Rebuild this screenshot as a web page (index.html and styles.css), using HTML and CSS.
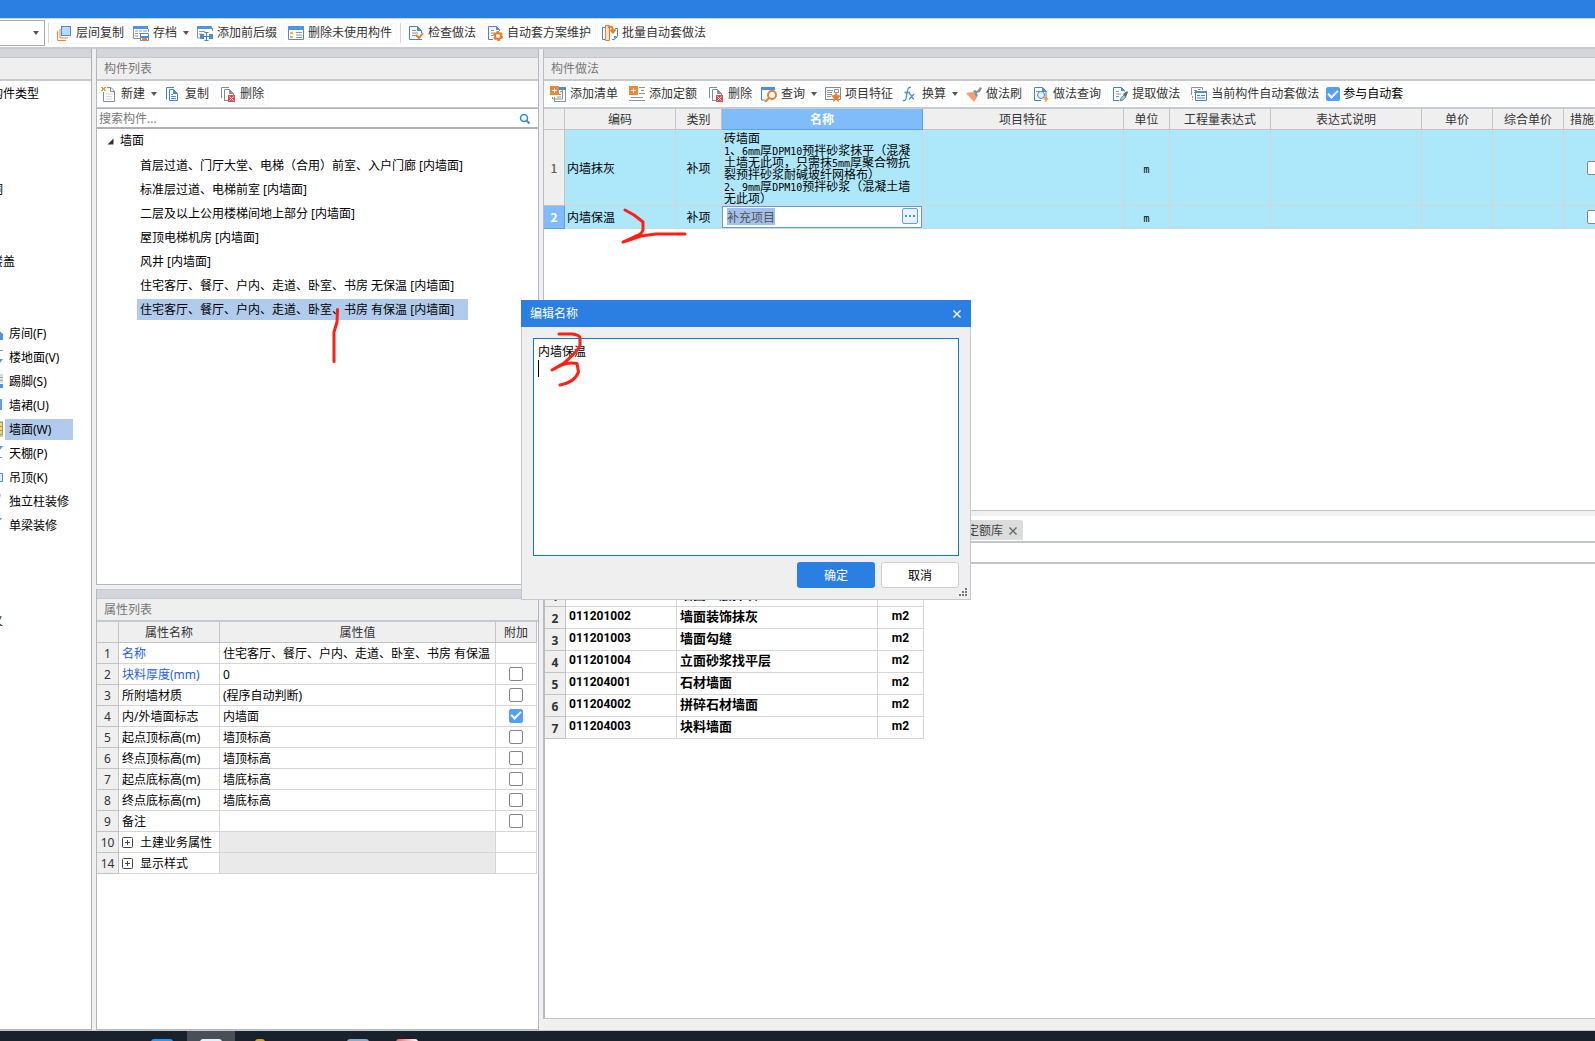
FILE: index.html
```html
<!DOCTYPE html>
<html lang="zh-CN">
<head>
<meta charset="utf-8">
<title>构件做法</title>
<link rel="stylesheet" href="styles.css">
</head>
<body>
<svg class="sprite" aria-hidden="true">
  <symbol id="i-layers" viewBox="0 0 16 16"><path d="M1.500 6v9.500H10M4 4v9h8" fill="none" stroke="#ef8532"/><rect x="5.500" y="1.500" width="9" height="9" fill="#b7d9ff" stroke="#4a8ddb"/></symbol>
  <symbol id="i-archive" viewBox="0 0 16 16"><path d="M.5 1v12.500H8M15.500 4v3" fill="none" stroke="#8a949d"/><path d="M0 1h15v3H0z" fill="#4f95e4"/><path d="M2 6h3M6 6h3M10 6h4M2 8.500h3M6 8.500h2M2 11h3" stroke="#8a949d"/><path d="M7.500 8.500h8v7h-8z" fill="#fff" stroke="#4a8ddb"/><path d="M8 11h7v2H8z" fill="#4a8ddb"/><path d="M9 13h5v3H9z" fill="#ef7c26"/></symbol>
  <symbol id="i-affix" viewBox="0 0 16 16"><path d="M.5 1v12h4M15.500 3v3" fill="none" stroke="#8a949d"/><path d="M0 1h15v3H0z" fill="#4f95e4"/><path d="M2 6.500h6M2 9h3" stroke="#8a949d"/><path d="M3 9h4v5H3zM12 9h4v5h-4z" fill="#4a8ddb"/><path d="M9.500 8v7.500M7.500 7.500h4M7.500 15.500h4M5 11.500h8" stroke="#3f82d6"/></symbol>
  <symbol id="i-unused" viewBox="0 0 16 16"><path d="M.5 2v12.500h15V2" fill="#fff" stroke="#4a8ddb"/><path d="M0 1h16v4H0z" fill="#4f95e4"/><path d="M2 7l3 2M5 7L2 9M2 11l3 2M5 11l-3 2" stroke="#f39a2c"/><path d="M8 7.500h6M8 10h6M8 12.500h6" stroke="#8a949d"/></symbol>
  <symbol id="i-check" viewBox="0 0 16 16"><path d="M13.500 8V5.500l-4-4h-8v13H14" fill="none" stroke="#3f82d6"/><path d="M9 1v5h5z" fill="#4a8ddb"/><path d="M4 5.500h4M4 8h6M4 10.500h4" stroke="#8a949d"/><path d="M8 10l3 3 4-5" fill="none" stroke="#ef7c26" stroke-width="2"/></symbol>
  <symbol id="i-scheme" viewBox="0 0 16 16"><path d="M12.500 6V4.500l-3-3h-8v13H6" fill="none" stroke="#3f82d6"/><path d="M9 1v4h4z" fill="#4a8ddb"/><path d="M4 5.500h3M4 8h4M4 10.500h2" stroke="#8a949d"/><circle cx="11" cy="11" r="4" fill="none" stroke="#ef7c26" stroke-width="2" stroke-dasharray="2.500 1.680"/><circle cx="11" cy="11" r="3" fill="#fff" stroke="#ef7c26" stroke-width="2"/></symbol>
  <symbol id="i-batch" viewBox="0 0 16 16"><path d="M3 2.500H.5v12H3M13 3.500h2.500v8l-3 3H10" fill="none" stroke="#3f82d6"/><path d="M12 11h3l-3 3z" fill="#4a8ddb"/><path d="M3.500.5h4v15h-4z" fill="#fde3cf" stroke="#ef7c26"/><path d="M6 2.500c4-2 5 0 5 4M8.500 4.500l2.500 3 2.500-3" fill="none" stroke="#ef7c26" stroke-width="2"/></symbol>
  <symbol id="i-new" viewBox="0 0 16 16"><path d="M2.500 6v9.500h11V5L10 1.500H6" fill="#fff" stroke="#7f8a94"/><path d="M9.500 1.500v4h4" fill="none" stroke="#7f8a94"/><path d="M5 8h6M5 10.500h6M5 13h6" stroke="#cfd4d8"/><path d="M0 1h2v1H0zM3 1h2v1H3zM1 2h3v2H1zM0 4h2v1H0zM3 4h2v1H3z" fill="#f39a2c"/></symbol>
  <symbol id="i-copy" viewBox="0 0 16 16"><path d="M1.500 13.500V1.500H9" fill="none" stroke="#3f82d6"/><path d="M4.500 3.500h4l4 4v7h-8z" fill="#fff" stroke="#3f82d6"/><path d="M8 3v5h5z" fill="#4a8ddb"/><path d="M6 8.500h2M6 10.500h5M6 12.500h5" stroke="#4a8ddb"/></symbol>
  <symbol id="i-del" viewBox="0 0 16 16"><path d="M1.500 12V1.500H9M4.500 14.500v-11h5l4 4V9M4 14.500h4" fill="none" stroke="#7f8a94"/><path d="M9 3v5h5z" fill="#8a949d"/><path d="M8 9h7v7H8z" fill="#d9504e"/><path d="M9.500 10.500l4 4M13.500 10.500l-4 4" stroke="#fff"/></symbol>
  <symbol id="i-addlist" viewBox="0 0 16 16"><path d="M9 1h7v3H9z" fill="#4a8ddb"/><path d="M15.500 4v11.500h-11V11M12.500 4v9H2.500v-2M10 5.500h3" fill="none" stroke="#8a949d"/><path d="M7 8.500h4M7 11h4" stroke="#8a949d"/><path d="M0 0h9v9H0z" fill="#f08632"/><path d="M4.500 2v5M2 4.500h5" stroke="#fff"/></symbol>
  <symbol id="i-addquota" viewBox="0 0 16 16"><path d="M10 1.500h6M12 4.500h3M10 7.500h6M2 11.500h12M0 14.500h16" stroke="#8a949d"/><path d="M0 0h9v9H0z" fill="#f08632"/><path d="M4.500 2v5M2 4.500h5" stroke="#fff"/></symbol>
  <symbol id="i-query" viewBox="0 0 16 16"><path d="M.5 2v12H4M13.500 2v2" fill="none" stroke="#3f82d6"/><path d="M0 1h14v3H0z" fill="#4a8ddb"/><circle cx="11" cy="9" r="4" fill="#fff" stroke="#ef7c26" stroke-width="2"/><path d="M8 12l-4 4" stroke="#ef7c26" stroke-width="2"/></symbol>
  <symbol id="i-feature" viewBox="0 0 16 16"><path d="M.5 1.500h15v12H.5z" fill="#fff" stroke="#7f8a94"/><path d="M2 4.500h6M2 6.500h5M2 8.500h5M2 10.500h4M9.500 3.500h4v3h-4z" fill="none" stroke="#8a949d"/><path d="M11 6l1.500 3 3.500.5-2.500 2.500.5 4-3-2-3 2 .5-4L6 9.500l3.500-.5z" fill="#ef7c26"/></symbol>
  <symbol id="i-fx" viewBox="0 0 16 16"><path d="M1 14.500c4 1 3-4 4-8s1-5.500 4-5M2.500 6.500H8M7 8c3-1 2 5 5 5M12 8l-5 5.500" fill="none" stroke="#4a8ddb" stroke-width="1.300"/></symbol>
  <symbol id="i-brush" viewBox="0 0 16 16"><path d="M0 7l7-1 4 5-3 5z" fill="#ff9a6b"/><path d="M7 5l2-1 2 1 3-4 2 1-2 4-3 1 1 3-2 1z" fill="#8a949d"/></symbol>
  <symbol id="i-find" viewBox="0 0 16 16"><path d="M13 15.500V5L9.500 1.500h-8v13H8" fill="none" stroke="#3f82d6"/><path d="M9 1v5h5z" fill="#4a8ddb"/><circle cx="8" cy="9" r="3.500" fill="#e4eefb" stroke="#5b80bd"/><path d="M3 5.500h4" stroke="#8a949d"/><path d="M10.500 11l1.500 1.500" stroke="#5b80bd"/><path d="M13 10l1 2 2 1-2 1-1 2-1-2-2-1 2-1z" fill="#f5a623"/></symbol>
  <symbol id="i-extract" viewBox="0 0 16 16"><path d="M12.500 5.500V4.500l-3-3h-8v13H7" fill="none" stroke="#3f82d6"/><path d="M9 1v4h4z" fill="#4a8ddb"/><path d="M4 5.500h3M4 8h5M4 10.500h3" stroke="#8a949d"/><path d="M8 15l1-3 3-3 2 2-3 3z" fill="#9fd0d8" stroke="#6f8c96"/><path d="M11 8l4-3 1 1-2 5z" fill="#5c6770"/></symbol>
  <symbol id="i-current" viewBox="0 0 16 16"><path d="M.5 9V1.500h11V4M3 4.500h3M7 3.500h2.500M3 6.500h1" fill="none" stroke="#8a949d"/><path d="M1.500 10v4" stroke="#ef7c26" stroke-dasharray="2 1"/><path d="M4.500 5.500h11v9h-11z" fill="#fff" stroke="#3f82d6"/><path d="M4 5h12v2H4z" fill="#4a8ddb"/><path d="M6 9.500h3M10 9.500h4M6 12h8" stroke="#3f82d6"/></symbol>
  <symbol id="i-glass" viewBox="0 0 16 16"><circle cx="7" cy="7" r="3.500" fill="#eef7ff" stroke="#3a8dc0" stroke-width="1.500"/><path d="M9.500 9.500l3 3" stroke="#3a8dc0" stroke-width="2"/></symbol>
  <symbol id="i-caret" viewBox="0 0 6 4"><path d="M0 0h6L3 4z" fill="#555"/></symbol>
  <symbol id="i-dots" viewBox="0 0 10 2"><path d="M0 0h2v2H0zM4 0h2v2H4zM8 0h2v2H8z" fill="#4a94dc"/></symbol>
  <symbol id="i-x" viewBox="0 0 8 8"><path d="M.5.5l7 7M7.500.5l-7 7" fill="none" stroke="currentColor" stroke-width="1.400"/></symbol>
  <symbol id="i-plus" viewBox="0 0 11 11"><rect x=".5" y=".5" width="10" height="10" rx="1" fill="#fff" stroke="#444"/><path d="M3 5.500h5M5.500 3v5" stroke="#444"/></symbol>
  <symbol id="s-room" viewBox="0 0 16 16"><path d="M1 8l7-6 8 7v6H2V8z" fill="#4f95e4"/></symbol>
  <symbol id="s-floor" viewBox="0 0 16 16"><path d="M1 1.500h15" stroke="#8a949d"/><path d="M11 10h5l-3 4z" fill="#4f95e4"/></symbol>
  <symbol id="s-skirt" viewBox="0 0 16 16"><path d="M0 1h16v9H0z" fill="#ddd"/><path d="M0 4.500h16M0 7.500h16" stroke="#aaa"/><path d="M0 11h16v4H0z" fill="#4f95e4"/></symbol>
  <symbol id="s-dado" viewBox="0 0 16 16"><path d="M2 2h13v11H2z" fill="#5d9fe8"/></symbol>
  <symbol id="s-wall" viewBox="0 0 16 16"><path d="M.5 1.500h15v12H.5zM0 5.500h16M0 9.500h16M8 2v12" fill="#e6d88c" stroke="#b39b3a"/></symbol>
  <symbol id="s-ceil" viewBox="0 0 16 16"><path d="M11 1h5l-4 5z" fill="#4f95e4"/><path d="M0 12.500h15" stroke="#8a949d"/></symbol>
  <symbol id="s-susp" viewBox="0 0 16 16"><path d="M1.500 4.500h14v8h-14z" fill="#dcebfc" stroke="#4a8ddb"/></symbol>
  <symbol id="s-col" viewBox="0 0 16 16"><path d="M10 1h4l-1 4z" fill="#aaa"/></symbol>
  <symbol id="s-beam" viewBox="0 0 16 16"><path d="M10 1h5l-4 5z" fill="#4f95e4"/></symbol>
</svg>

<header class="titlebar"></header>
<nav class="ribbon toolbar">
  <label class="combo"><select aria-label="楼层"><option></option></select><svg class="caret"><use href="#i-caret"/></svg></label>
  <span class="sep"></span>
  <button class="tool"><svg><use href="#i-layers"/></svg>层间复制</button>
  <button class="tool drop"><svg><use href="#i-archive"/></svg>存档<svg class="caret"><use href="#i-caret"/></svg></button>
  <button class="tool"><svg><use href="#i-affix"/></svg>添加前后缀</button>
  <button class="tool"><svg><use href="#i-unused"/></svg>删除未使用构件</button>
  <span class="sep"></span>
  <button class="tool"><svg><use href="#i-check"/></svg>检查做法</button>
  <button class="tool"><svg><use href="#i-scheme"/></svg>自动套方案维护</button>
  <button class="tool"><svg><use href="#i-batch"/></svg>批量自动套做法</button>
</nav>

<main class="workspace">
  <aside class="types panel">
    <div class="strip"></div>
    <h2 class="caption"></h2>
    <ul class="typelist">
      <li>常用构件类型</li><li>轴线</li><li>柱</li><li>墙</li><li>门窗洞</li><li>梁</li><li>板</li><li>空心楼盖</li><li>楼梯</li><li>装修</li>
      <li class="kid"><svg><use href="#s-room"/></svg><span>房间(F)</span></li>
      <li class="kid"><svg><use href="#s-floor"/></svg><span>楼地面(V)</span></li>
      <li class="kid"><svg><use href="#s-skirt"/></svg><span>踢脚(S)</span></li>
      <li class="kid"><svg><use href="#s-dado"/></svg><span>墙裙(U)</span></li>
      <li class="kid on"><svg><use href="#s-wall"/></svg><span>墙面(W)</span></li>
      <li class="kid"><svg><use href="#s-ceil"/></svg><span>天棚(P)</span></li>
      <li class="kid"><svg><use href="#s-susp"/></svg><span>吊顶(K)</span></li>
      <li class="kid"><svg><use href="#s-col"/></svg><span>独立柱装修</span></li>
      <li class="kid"><svg><use href="#s-beam"/></svg><span>单梁装修</span></li>
      <li>土方</li><li>基础</li><li>其它</li><li>自定义</li>
    </ul>
  </aside>

  <div class="middle">
    <section class="panel components">
      <div class="strip"></div>
      <h2 class="caption">构件列表</h2>
      <div class="toolbar inner">
        <button class="tool drop"><svg><use href="#i-new"/></svg>新建<svg class="caret"><use href="#i-caret"/></svg></button>
        <button class="tool"><svg><use href="#i-copy"/></svg>复制</button>
        <button class="tool"><svg><use href="#i-del"/></svg>删除</button>
      </div>
      <label class="search"><input type="text" placeholder="搜索构件..." aria-label="搜索构件"><svg><use href="#i-glass"/></svg></label>
      <div class="tree">
        <div class="node root"><svg viewBox="0 0 7 7"><path d="M6.500.5v6h-6z" fill="#333"/></svg>墙面</div>
        <div class="node"><span>首层过道、门厅大堂、电梯（合用）前室、入户门廊 [内墙面]</span></div>
        <div class="node"><span>标准层过道、电梯前室 [内墙面]</span></div>
        <div class="node"><span>二层及以上公用楼梯间地上部分 [内墙面]</span></div>
        <div class="node"><span>屋顶电梯机房 [内墙面]</span></div>
        <div class="node"><span>风井 [内墙面]</span></div>
        <div class="node"><span>住宅客厅、餐厅、户内、走道、卧室、书房 无保温 [内墙面]</span></div>
        <div class="node on"><span>住宅客厅、餐厅、户内、走道、卧室、书房 有保温 [内墙面]</span></div>
      </div>
    </section>
    <section class="panel props">
      <div class="strip"></div>
      <h2 class="caption">属性列表</h2>
      <table class="grid proptable">
        <colgroup><col class="c-num"><col class="c-name"><col><col class="c-add"></colgroup>
        <thead><tr><th></th><th>属性名称</th><th>属性值</th><th>附加</th></tr></thead>
        <tbody>
          <tr><th>1</th><td class="link">名称</td><td>住宅客厅、餐厅、户内、走道、卧室、书房 有保温</td><td></td></tr>
          <tr><th>2</th><td class="link">块料厚度(mm)</td><td>0</td><td class="mid"><input type="checkbox" aria-label="附加 块料厚度"></td></tr>
          <tr><th>3</th><td>所附墙材质</td><td>(程序自动判断)</td><td class="mid"><input type="checkbox" aria-label="附加 所附墙材质"></td></tr>
          <tr><th>4</th><td>内/外墙面标志</td><td>内墙面</td><td class="mid"><input type="checkbox" checked aria-label="附加 内/外墙面标志"></td></tr>
          <tr><th>5</th><td>起点顶标高(m)</td><td>墙顶标高</td><td class="mid"><input type="checkbox" aria-label="附加 起点顶标高"></td></tr>
          <tr><th>6</th><td>终点顶标高(m)</td><td>墙顶标高</td><td class="mid"><input type="checkbox" aria-label="附加 终点顶标高"></td></tr>
          <tr><th>7</th><td>起点底标高(m)</td><td>墙底标高</td><td class="mid"><input type="checkbox" aria-label="附加 起点底标高"></td></tr>
          <tr><th>8</th><td>终点底标高(m)</td><td>墙底标高</td><td class="mid"><input type="checkbox" aria-label="附加 终点底标高"></td></tr>
          <tr><th>9</th><td>备注</td><td></td><td class="mid"><input type="checkbox" aria-label="附加 备注"></td></tr>
          <tr><th>10</th><td><span class="group"><svg><use href="#i-plus"/></svg>土建业务属性</span></td><td class="off"></td><td></td></tr>
          <tr><th>14</th><td><span class="group"><svg><use href="#i-plus"/></svg>显示样式</span></td><td class="off"></td><td></td></tr>
        </tbody>
      </table>
    </section>
  </div>

  <div class="right">
    <section class="panel methods">
      <div class="strip"></div>
      <h2 class="caption">构件做法</h2>
      <div class="toolbar inner">
        <button class="tool"><svg><use href="#i-addlist"/></svg>添加清单</button>
        <button class="tool"><svg><use href="#i-addquota"/></svg>添加定额</button>
        <button class="tool"><svg><use href="#i-del"/></svg>删除</button>
        <button class="tool drop"><svg><use href="#i-query"/></svg>查询<svg class="caret"><use href="#i-caret"/></svg></button>
        <button class="tool"><svg><use href="#i-feature"/></svg>项目特征</button>
        <button class="tool drop"><svg><use href="#i-fx"/></svg>换算<svg class="caret"><use href="#i-caret"/></svg></button>
        <button class="tool"><svg><use href="#i-brush"/></svg>做法刷</button>
        <button class="tool"><svg><use href="#i-find"/></svg>做法查询</button>
        <button class="tool"><svg><use href="#i-extract"/></svg>提取做法</button>
        <button class="tool"><svg><use href="#i-current"/></svg>当前构件自动套做法</button>
        <label class="join"><input type="checkbox" checked>参与自动套</label>
      </div>
      <table class="grid methodtable">
        <colgroup><col class="w21"><col class="w111"><col class="w46"><col class="w201"><col class="w201"><col class="w46"><col class="w101"><col class="w151"><col class="w71"><col class="w71"><col class="w61"></colgroup>
        <thead><tr><th></th><th>编码</th><th>类别</th><th class="sel">名称</th><th>项目特征</th><th>单位</th><th>工程量表达式</th><th>表达式说明</th><th>单价</th><th>综合单价</th><th>措施项目</th></tr></thead>
        <tbody>
          <tr class="tall"><th><b>1</b></th><td>内墙抹灰</td><td class="mid">补项</td><td class="desc">砖墙面<br><i>1</i>、<i>6mm</i>厚<i>DPM10</i>预拌砂浆抹平（混凝<br>土墙无此项，只需抹<i>5mm</i>厚聚合物抗<br>裂预拌砂浆耐碱玻纤网格布）<br><i>2</i>、<i>9mm</i>厚<i>DPM10</i>预拌砂浆（混凝土墙<br>无此项）</td><td></td><td class="mid"><i>m</i></td><td></td><td></td><td></td><td></td><td class="mid"><input type="checkbox" aria-label="措施项目 1"></td></tr>
          <tr class="short"><th class="sel">2</th><td>内墙保温</td><td class="mid">补项</td><td class="edit"><div class="editor"><input type="text" value="补充项目" aria-label="名称"><button aria-label="编辑"><svg><use href="#i-dots"/></svg></button></div></td><td></td><td class="mid"><i>m</i></td><td></td><td></td><td></td><td></td><td class="mid"><input type="checkbox" aria-label="措施项目 2"></td></tr>
        </tbody>
      </table>
    </section>
    <section class="panel library">
      <div class="tabs"><div class="tab">查询定额库<svg><use href="#i-x"/></svg></div></div>
      <div class="filter"></div>
      <table class="grid libtable">
        <colgroup><col class="w21"><col class="w111"><col class="w201"><col class="w46"></colgroup>
        <thead><tr><th></th><th>编码</th><th>名称</th><th>单位</th></tr></thead>
        <tbody>
          <tr><th>1</th><td class="code">011201001</td><td>墙面一般抹灰</td><td class="mid code">m2</td></tr>
          <tr><th>2</th><td class="code">011201002</td><td>墙面装饰抹灰</td><td class="mid code">m2</td></tr>
          <tr><th>3</th><td class="code">011201003</td><td>墙面勾缝</td><td class="mid code">m2</td></tr>
          <tr><th>4</th><td class="code">011201004</td><td>立面砂浆找平层</td><td class="mid code">m2</td></tr>
          <tr><th>5</th><td class="code">011204001</td><td>石材墙面</td><td class="mid code">m2</td></tr>
          <tr><th>6</th><td class="code">011204002</td><td>拼碎石材墙面</td><td class="mid code">m2</td></tr>
          <tr><th>7</th><td class="code">011204003</td><td>块料墙面</td><td class="mid code">m2</td></tr>
        </tbody>
      </table>
    </section>
  </div>
</main>

<footer class="taskbar">
  <span><b class="t-blue"></b></span><span class="on"><b class="t-pale"></b></span><span><b class="t-gold"></b></span><span></span><span><b class="t-steel"></b></span><span><b class="t-red"></b></span>
</footer>

<div class="dialog" role="dialog" aria-labelledby="dlg-title">
  <div class="dlg-head"><h1 id="dlg-title">编辑名称</h1><button class="close" aria-label="关闭"><svg><use href="#i-x"/></svg></button></div>
  <div class="dlg-body">
    <div class="field"><textarea aria-label="名称" spellcheck="false">内墙保温
</textarea><span class="cursor"></span></div>
    <div class="actions"><button class="ok">确定</button><button class="cancel">取消</button></div>
  </div>
  <svg class="grip" viewBox="0 0 8 8"><path d="M6 0h2v2H6zM3 3h2v2H3zM6 3h2v2H6zM0 6h2v2H0zM3 6h2v2H3zM6 6h2v2H6z" fill="#777"/></svg>
</div>

<svg class="ink" aria-hidden="true">
  <path d="M337.500 309.500L337 322L334 332V361.500"/>
  <path d="M625 210L634 215L643 222V230Q642 234 636 236L623 242L641 236L656 234H685"/>
  <path d="M559 334H572Q580 335 580 338V345Q579 350 564 363L552 370L562 365Q568 362 577 363.500L578.500 372Q575 382 560 385"/>
</svg>
</body>
</html>
```

FILE: styles.css
```css
* { box-sizing: border-box; }
html, body { height: 100%; }
body {
  margin: 0;
  display: flex;
  flex-direction: column;
  overflow: hidden;
  background: #f0f0f0;
  color: #000;
  font: 12px/16px "Noto Sans", "Noto Sans CJK SC", sans-serif;
}
button, input, select, textarea { font: inherit; color: inherit; margin: 0; }
button { background: none; border: 0; padding: 0; }
h1, h2 { margin: 0; font-size: 12px; font-weight: 400; }
i { font-style: normal; }
.sprite { position: absolute; width: 0; height: 0; }

.titlebar { flex: none; height: 19px; background: #2c7fe2; border-bottom: 1px solid #d0d4d9; }

.toolbar { display: flex; align-items: center; gap: 1px; background: #fff; white-space: nowrap; }
.ribbon { flex: none; height: 30px; border-bottom: 2px solid #c7cacf; }
.combo {
  display: flex; align-items: center; justify-content: flex-end;
  width: 45px; height: 26px; padding-right: 5px;
  border: 1px solid #aaa; border-left: 0; background: #fff;
}
.combo select { flex: 1; min-width: 0; appearance: none; border: 0; background: none; }
.sep { width: 1px; height: 20px; margin: 0 1px 0 2px; background: #d5d5d5; }
.tool {
  display: flex; align-items: center; gap: 4px;
  height: 21px; padding: 0 4px;
  border: 1px solid #f8f8f8; border-radius: 3px; color: #333;
}
.tool svg { width: 16px; height: 16px; }
.tool .caret, .caret { width: 6px; height: 4px; }
.tool.drop { padding: 0 1px 0 2px; border-color: transparent; }
.drop .caret { margin-left: 2px; }
.inner { flex: none; height: 27px; padding-left: 1px; border-bottom: 1px solid #c7cacf; }
.join { display: flex; align-items: center; gap: 3px; padding-left: 1px; }

.workspace { flex: 1; min-height: 0; display: flex; gap: 4px; border-bottom: 1px solid #c3c8d0; }
.panel { display: flex; flex-direction: column; min-height: 0; min-width: 0; overflow: hidden; background: #fff; }
.strip { flex: none; height: 9px; background: #d4d5db; border-bottom: 1px solid #c6c9ce; }
.caption {
  flex: none; height: 23px; padding: 2px 7px 0; line-height: 18px;
  background: #efefef; border-bottom: 2px solid #c6c9ce; color: #777;
}

.types { flex: 0 0 92px; border-right: 1px solid #b0b0b0; border-bottom: 1px solid #b0b0b0; }
.typelist { list-style: none; margin: 0 0 0 -33px; padding: 1px 0 0; white-space: nowrap; }
.typelist li { display: flex; align-items: center; height: 24px; }
.typelist .kid { padding: 0 0 2px 20px; gap: 2px; }
.kid svg { width: 16px; height: 16px; }
.kid span { padding: 0 4px; line-height: 21px; }
.kid.on span { flex: 0 0 68px; background: #b1cbec; }
.kid.on svg { background: #b1cbec; }

.middle { flex: 0 0 443px; display: flex; flex-direction: column; gap: 4px; }
.middle .panel { border: 1px solid #b4b7bb; border-top: 0; }
.components { flex: 536 1 0; }
.props { flex: 441 1 0; }
.props .strip { height: 10px; border-top: 1px solid #c6c9ce; }
.search {
  flex: none; display: flex; align-items: center; height: 21px; padding: 1px 5px 0 2px;
  border-top: 1px solid #b0b0b0; border-bottom: 2px solid #b0b0b0;
}
.search input { flex: 1; min-width: 0; padding: 0; border: 0; outline: 0; line-height: 16px; }
.search input::placeholder { color: #777; }
.search svg { width: 16px; height: 16px; }
.node { display: flex; align-items: center; height: 24px; padding-left: 40px; white-space: nowrap; }
.node span { padding: 0 14px 0 3px; line-height: 21px; }
.node.on span { background: #b1cbec; }
.root { padding-left: 10px; gap: 6px; }
.root svg { width: 7px; height: 7px; }

.grid { border-collapse: separate; border-spacing: 0; table-layout: fixed; }
.grid th, .grid td {
  padding: 0; overflow: hidden; white-space: nowrap; font-weight: 400;
  border-right: 1px solid #d5d5d5; border-bottom: 1px solid #d5d5d5;
}
.grid th { background: #efefef; color: #333; border-color: #c3c3c3; text-align: center; }
.grid td { padding-left: 3px; text-align: left; }
.grid td.mid { padding: 0; text-align: center; }

.proptable { width: 440px; }
.proptable tr { height: 21px; }
.proptable th, .proptable td { padding-top: 2px; }
.c-num { width: 22px; }
.c-name { width: 101px; }
.c-add { width: 41px; }
.proptable .link { color: #1c5cf0; }
.proptable .off { background: #eaeaea; }
.group { display: flex; align-items: center; gap: 7px; }
.group svg { width: 11px; height: 11px; }

input[type="checkbox"] {
  appearance: none; display: grid; place-items: center;
  width: 14px; height: 14px; border: 1px solid #858585; border-radius: 2px; background: #fff;
}
.mid input[type="checkbox"] { margin: 0 auto; }
input[type="checkbox"]:checked { background: #539ff8; border-color: #539ff8; }
input[type="checkbox"]:checked::after {
  content: ""; width: 8px; height: 4px; margin-bottom: 3px;
  border-left: 2px solid #fff; border-bottom: 2px solid #fff; transform: rotate(-45deg);
}

.right { flex: 1; min-width: 0; display: flex; flex-direction: column; gap: 5px; padding-bottom: 11px; }
.right .panel { border-left: 1px solid #b9bcc0; border-bottom: 1px solid #c4c4c4; }
.methods { flex: 462 1 0; }
.right .library { flex: 503 1 0; border-left-width: 2px; }
.methods .inner { height: 28px; border-bottom-width: 2px; }
.w21 { width: 21px; } .w46 { width: 46px; } .w61 { width: 61px; } .w71 { width: 71px; }
.w101 { width: 101px; } .w111 { width: 111px; } .w151 { width: 151px; } .w201 { width: 201px; }

.methodtable { width: 1081px; font-family: "Noto Sans CJK SC", sans-serif; }
.methodtable tr { height: 21px; }
.methodtable .tall { height: 76px; }
.methodtable .short { height: 22px; }
.methodtable td { padding-left: 2px; background: #ade8fa; }
.methodtable i { font: 10px/0 "DejaVu Sans Mono", monospace; }
.methodtable th.sel { background: #80bbfa; border-color: #5f9fe6; color: #fff; font-weight: 700; }
.methodtable b { color: #6d5a4b; font-weight: 500; }
.methodtable .desc { padding: 0 0 0 2px; line-height: 12px; }
.methodtable .edit { padding: 0; }
.editor {
  display: flex; justify-content: space-between; height: 22px; padding: 1px 3px 2px 4px;
  border: 1px solid #5f9fe6; background: #fff;
}
.editor input { width: 48px; height: 17px; padding: 0; border: 0; background: #a2c1ec; color: #555; }
.editor button {
  display: flex; align-items: center; justify-content: center;
  width: 16px; height: 16px; border: 1px solid #5f9fe6; border-radius: 2px; background: #e9f3fd;
}
.editor svg { width: 10px; height: 2px; }

.tabs { flex: none; display: flex; align-items: flex-start; height: 27px; padding: 4px 0 0 392px; border-bottom: 2px solid #c2c6ca; }
.tab {
  display: flex; align-items: center; gap: 6px; height: 20px; padding: 1px 6px 0;
  border-radius: 2px 2px 0 0; background: #dcdcdc; color: #444; white-space: nowrap;
}
.tab svg { width: 8px; height: 8px; color: #666; }
.filter { flex: none; height: 21px; border-bottom: 2px solid #c4c4c4; }
.libtable { width: 379px; font-weight: 700; }
.libtable tr { height: 22px; }
.libtable thead tr { height: 21px; }
.libtable th, .libtable td { font-weight: 700; }
.libtable tbody th { padding-top: 2px; }
.libtable td, .libtable td.mid { font-size: 13px; line-height: 16px; padding-bottom: 4px; }
.libtable td.code { font-family: Roboto, sans-serif; font-size: 12px; }

.taskbar { flex: none; display: flex; gap: 1px; height: 10px; padding-left: 138px; background: #19222c; overflow: hidden; }
.taskbar span { flex: 0 0 48px; display: flex; justify-content: center; padding-top: 8px; }
.taskbar .on { background: #4a4f57; }
.taskbar b { width: 22px; height: 22px; border-radius: 3px; }
.t-blue { background: #2f96ee; }
.t-pale { background: #e2f1fb; }
.taskbar .t-gold { width: 10px; background: #c9a51c; }
.t-steel { background: #8fa9c6; }
.t-red { background: linear-gradient(90deg, #f0605f, #fff); }

.dialog {
  position: absolute; left: 521px; top: 300px; width: 450px; height: 300px;
  display: flex; flex-direction: column; background: #efefef; border: 1px solid #c0c9d3; border-top: 0;
}
.dlg-head {
  flex: none; display: flex; align-items: center; justify-content: space-between;
  height: 27px; margin: 0 -1px; padding: 0 10px 0 9px; background: #2c7fe2; color: #fff;
}
.close { display: flex; }
.close svg { width: 8px; height: 8px; }
.dlg-body { flex: 1; display: flex; flex-direction: column; gap: 6px; padding: 11px; }
.field { position: relative; flex: 1; display: flex; }
.field textarea {
  flex: 1; padding: 4px; line-height: 17px; resize: none; outline: 0;
  border: 1px solid #0f7ad6; border-radius: 0; background: #fff;
}
.cursor { position: absolute; left: 5px; top: 22px; width: 1px; height: 17px; background: #000; }
.actions { display: flex; justify-content: flex-end; gap: 6px; }
.actions button { width: 78px; height: 26px; padding-top: 2px; border-radius: 3px; }
.ok { background: #2c7fe2; color: #fff; }
.actions .cancel { background: #fff; border: 1px solid #ccc; }
.grip { position: absolute; right: 3px; bottom: 3px; width: 8px; height: 8px; }

.ink { position: absolute; left: 0; top: 0; width: 100%; height: 100%; pointer-events: none; }
.ink path { fill: none; stroke: #fd2013; stroke-width: 3; stroke-linecap: round; stroke-linejoin: round; }
```
